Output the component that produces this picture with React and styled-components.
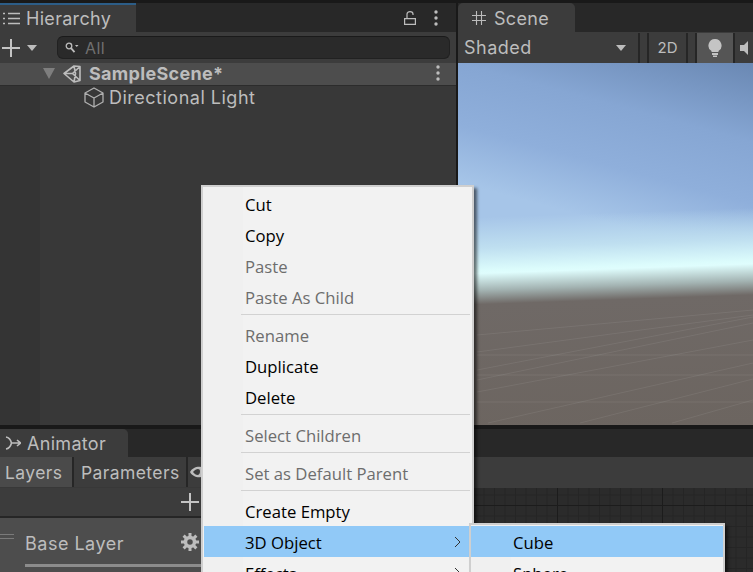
import React from 'react';
import styled, { createGlobalStyle } from 'styled-components';

const GlobalStyle = createGlobalStyle`
  html, body { margin: 0; padding: 0; background: #191919; }
  * { box-sizing: border-box; }
`

const Editor = styled.div`
  position: relative;
  width: 753px;
  height: 572px;
  overflow: hidden;
  background: #191919;
  padding-top: 3px;
  font-family: "Inter", "Liberation Sans", sans-serif;
  font-size: 18px;
  color: #bdbdbd;
`
const TopRow = styled.div`
  display: grid;
  grid-template-columns: 456px 295px;
  gap: 2px;
  height: 422px;
`
const Pane = styled.section`
  display: flex;
  flex-direction: column;
  min-width: 0;
  overflow: hidden;
`
const TabStrip = styled.div`
  display: flex;
  justify-content: space-between;
  flex: none;
  height: ${p => p.$height || 29}px;
  background: #282828;
`
const Tab = styled.div`
  display: flex;
  align-items: center;
  gap: ${p => p.$gap || 6}px;
  width: ${p => p.$width}px;
  padding-left: ${p => p.$pad || 2}px;
  padding-top: ${p => (p.$rounded ? 1 : 0)}px;
  background: #3c3c3c;
  border-top: ${p => (p.$active ? '2px solid #2c5d87' : 'none')};
  border-top-right-radius: ${p => (p.$active ? 0 : 5)}px;
  border-top-left-radius: ${p => (p.$rounded ? 5 : 0)}px;
  letter-spacing: 0.3px;
`
const TabTools = styled.div`
  display: flex;
  align-items: center;
  gap: 18px;
  padding-right: 18px;
  background: #282828;
`
const Toolbar = styled.div`
  display: flex;
  align-items: center;
  flex: none;
  height: 31px;
  background: #3c3c3c;
`
const PlusButton = styled.div`
  display: flex;
  align-items: center;
  gap: 7px;
  width: 57px;
  padding-left: 2px;
`
const SearchField = styled.div`
  display: flex;
  align-items: center;
  gap: 6px;
  width: 393px;
  height: 23px;
  padding-left: 7px;
  background: #2a2a2a;
  border: 1px solid #212121;
  border-top-color: #1a1a1a;
  border-radius: 6px;
  color: #707070;
  font-size: 16px;
  letter-spacing: 0.4px;
`
const SceneRow = styled.div`
  display: flex;
  align-items: center;
  flex: none;
  height: 23px;
  padding: 0 0 2px 43px;
  background: #4d4d4d;
  border-bottom: 1px solid #2c2c2c;
  font-weight: 700;
  letter-spacing: 0.3px;
`
const SceneName = styled.span`
  flex: 1;
  margin-left: 8px;
`
const FoldCaret = styled.svg`
  margin-right: 8px;
`
const RowMenu = styled.div`
  width: 37px;
  display: flex;
  padding-left: 17px;
`
const TreeBody = styled.div`
  flex: 1;
  padding-left: 40px;
  background: linear-gradient(to right, #343434 40px, #383838 40px);
`
const TreeRow = styled.div`
  display: flex;
  align-items: center;
  gap: 5px;
  height: 23px;
  padding-left: 44px;
  letter-spacing: 0.5px;
`
const SceneBar = styled(Toolbar)`
  gap: 0;
`
const ShadingLabel = styled.div`
  display: flex;
  align-items: center;
  justify-content: space-between;
  flex: none;
  width: 180px;
  padding: 0 12px 0 6px;
  letter-spacing: 0.5px;
`
const BarButton = styled.div`
  display: flex;
  align-items: center;
  justify-content: center;
  flex: none;
  width: ${p => p.$width}px;
  height: 30px;
  background: ${p => (p.$on ? '#555555' : '#3c3c3c')};
  border-left: ${p => (p.$sep ? '2px solid #262626' : 'none')};
  font-size: 15px;
`
const Viewport = styled.div`
  position: relative;
  flex: 1;
  background:
    linear-gradient(178deg,
      rgba(222, 253, 253, 0) 155px,
      #bfdff0 186px,
      #dcfcfc 208px,
      #dffdfd 211px,
      #a3b3b2 228px,
      #6f6966 242px,
      #6c6560 100%),
    linear-gradient(195deg, #6a88b3 0, #86a6d3 18%, #8fafdb 32%, #a6c5e8 45%);
`
const GridLines = styled.svg`
  position: absolute;
  inset: 0;
  display: block;
`
const BottomArea = styled.div`
  margin-top: 4px;
  height: 143px;
  display: flex;
  flex-direction: column;
  background: #282828;
`
const AnimatorBody = styled.div`
  flex: 1;
  display: flex;
  min-height: 0;
`
const LayerPanel = styled.div`
  width: 220px;
  flex: none;
  display: flex;
  flex-direction: column;
`
const PanelTabs = styled.div`
  display: flex;
  height: 31px;
  background: #3c3c3c;
  border-bottom: 1px solid #383838;
`
const PanelTab = styled.div`
  display: flex;
  align-items: center;
  width: ${p => p.$width}px;
  padding-left: ${p => p.$pad}px;
  background: ${p => (p.$on ? '#4a4a4a' : 'transparent')};
  border-right: 2px solid #262626;
  font-size: 17.5px;
  letter-spacing: 0.4px;
`
const AddRow = styled.div`
  display: flex;
  align-items: center;
  height: 30px;
  padding-left: 181px;
  background: #3c3c3c;
  border-bottom: 2px solid #262626;
`
const LayerCard = styled.div`
  position: relative;
  flex: 1;
  display: flex;
  align-items: flex-start;
  padding: 15px 0 0 25px;
  background: #4d4d4d;
  letter-spacing: 0.5px;
`
const LayerName = styled.span`
  flex: none;
  width: 156px;
`
const DragHandle = styled.div`
  position: absolute;
  left: 0;
  top: 16px;
  width: 14px;
  height: 5px;
  border-top: 1px solid #7a7a7a;
  border-bottom: 1px solid #7a7a7a;
`
const WeightBar = styled.div`
  position: absolute;
  left: 25px;
  right: 0;
  bottom: 5px;
  height: 3px;
  background: #8c8c8c;
`
const GraphHeader = styled.div`
  height: 31px;
  background: #3c3c3c;
`
const GraphPanel = styled.div`
  flex: 1;
  display: flex;
  flex-direction: column;
`
const Graph = styled.div`
  flex: 1;
  background-color: #2b2b2b;
  background-image:
    linear-gradient(#1c1c1c 1px, transparent 1px),
    linear-gradient(90deg, #1c1c1c 1px, transparent 1px),
    linear-gradient(#252525 1px, transparent 1px),
    linear-gradient(90deg, #252525 1px, transparent 1px);
  background-size: 105px 105px, 105px 105px, 10.5px 10.5px, 10.5px 10.5px;
  background-position: 0 17px, 22px 0, 0 6.5px, 1px 0;
`
const Menu = styled.div`
  position: absolute;
  left: ${p => p.$left}px;
  top: ${p => p.$top}px;
  width: ${p => p.$width}px;
  height: ${p => p.$height}px;
  padding: ${p => p.$padTop}px 0 0;
  background: linear-gradient(to right, #f0f0f0 40px, #f2f2f2 40px);
  border: 2px solid #cfcfcf;
  border-bottom: 0;
  box-shadow: 3px 3px 3px rgba(0, 0, 0, 0.55);
  font-family: "Open Sans", "Liberation Sans", sans-serif;
  font-size: 16.7px;
  color: #000;
  overflow: hidden;
`
const Item = styled.div`
  position: relative;
  display: flex;
  align-items: center;
  height: 31px;
  margin-left: ${p => (p.$flush ? 1 : 0)}px;
  padding: 1px 0 0 ${p => (p.$flush ? 41 : 42)}px;
  color: ${p => (p.$disabled ? '#6d6d6d' : '#000')};
  background: ${p => (p.$on ? '#91c9f7' : 'transparent')};
`
const Chevron = styled.svg`
  position: absolute;
  right: 11px;
  top: 10px;
`
const Separator = styled.div`
  height: 7px;
  margin: 0 2px 0 38px;
  padding-top: 2px;

  &::before {
    content: '';
    display: block;
    height: 1px;
    background: #d2d2d2;
  }
`

const ListIcon = () => (
  <svg width="18" height="16" viewBox="0 0 18 16" fill="none" stroke="#bdbdbd">
    <path d="M1 2.500h2M6 2.500h12M6 7.500h12M6 12.500h12M1 7.500h2M1 12.500h2" strokeWidth="1.300" />
  </svg>
)

const HashIcon = () => (
  <svg width="14" height="14" viewBox="0 0 14 14" fill="none" stroke="#bdbdbd" strokeWidth="1.100">
    <path d="M4.500 0v14M9.500 0v14M0 4.500h14M0 9.500h14" />
  </svg>
)

const AnimatorIcon = () => (
  <svg width="16" height="14" viewBox="0 0 16 14" fill="none" stroke="#bdbdbd" strokeWidth="1.600">
    <path d="M1 1c3 .5 4.500 2 5.500 6M1 13c3-.5 4.500-2 5.500-6H15M12 4l3.500 3-3.500 3" />
  </svg>
)

const Plus = () => (
  <svg width="18" height="18" viewBox="0 0 18 18" stroke="#c4c4c4" strokeWidth="2">
    <path d="M0 9h18M9 0v18" />
  </svg>
)

const Caret = () => (
  <svg width="10" height="6" viewBox="0 0 10 6">
    <path d="M0 0h10L5 6z" fill="#bdbdbd" />
  </svg>
)

const LockIcon = () => (
  <svg width="12" height="14" viewBox="0 0 12 14" fill="none" stroke="#bdbdbd" strokeWidth="1.200">
    <path d="M.600 7.600h10.800v5.800H.600zM3 7V3C3 1.200 4.500.600 6 .600S9 1.200 9 3v1" />
  </svg>
)

const Kebab = ({ color = '#bdbdbd' }) => (
  <svg width="4" height="16" viewBox="0 0 4 16" fill={color}>
    <circle cx="2" cy="2" r="1.700" />
    <circle cx="2" cy="8" r="1.700" />
    <circle cx="2" cy="14" r="1.700" />
  </svg>
)

const SearchIcon = () => (
  <svg width="14" height="12" viewBox="0 0 14 12" fill="none" stroke="#bdbdbd" strokeWidth="1.300">
    <circle cx="4" cy="4" r="2.800" />
    <path d="M6 6.200l3.500 4" strokeWidth="1.800" />
    <path d="M10 3h3.500l-1.750 2z" fill="#bdbdbd" stroke="none" />
  </svg>
)

const UnityIcon = () => (
  <svg width="18" height="19" viewBox="0 0 18 19" fill="none" stroke="#bdbdbd" strokeWidth="1.600" strokeLinejoin="round">
    <path d="M1 9.500L11 2l6 .5 0 14-6 1.500zM1 9.500h8.500M17 2.500L9.500 9.500l7.500 7M11 2l1.500 7.500L11 18" />
  </svg>
)

const CubeIcon = () => (
  <svg width="20" height="21" viewBox="0 0 20 21" fill="none" stroke="#b0b0b0" strokeWidth="1.300" strokeLinejoin="round">
    <path d="M10 1l9 5v9l-9 5-9-5V6zM1 6l9 5 9-5M10 11v9" />
  </svg>
)

const BulbIcon = () => (
  <svg width="14" height="18" viewBox="0 0 14 18" fill="#c4c4c4">
    <path d="M7 0a6.500 6.500 0 0 1 3.500 12v1h-7v-1A6.500 6.500 0 0 1 7 0z" />
    <rect x="4" y="14" width="6" height="2" />
    <rect x="5" y="16.500" width="4" height="1.500" />
  </svg>
)

const AudioIcon = () => (
  <svg width="8" height="14" viewBox="0 0 8 14" fill="#bdbdbd">
    <path d="M0 4h4l4-4v14l-4-4H0z" />
  </svg>
)

const EyeIcon = () => (
  <svg width="20" height="14" viewBox="0 0 20 14" fill="#bdbdbd">
    <path d="M0 7c3-6 13-8 20 0-7 8-17 6-20 0zM3 7c3 4 7 4 7-.5C10 3 6 3.500 3 7z" />
  </svg>
)

const GearIcon = () => (
  <svg width="18" height="18" viewBox="0 0 18 18" fill="none" stroke="#bdbdbd">
    <circle cx="9" cy="9" r="4.500" strokeWidth="3.500" />
    <path d="M9 0v4M9 14v4M0 9h4M14 9h4M2.600 2.600l2.800 2.800M12.600 12.600l2.800 2.800M2.600 15.400l2.800-2.800M12.600 5.400l2.800-2.800" strokeWidth="3" />
  </svg>
)

const ChevronIcon = () => (
  <Chevron width="7" height="12" viewBox="0 0 7 12" fill="none" stroke="#333" strokeWidth="1">
    <path d="M1 1l5 5-5 5" />
  </Chevron>
)

// lines of the scene floor grid, in page coordinates
const gridLines = [
  [477, 335, 753, 310],
  [477, 352, 753, 315],
  [477, 370, 753, 317],
  [477, 380, 753, 323],
  [477, 392, 753, 340],
  [488, 423, 753, 363],
  [580, 423, 753, 379],
  [672, 423, 753, 400],
  [477, 355, 753, 355],
  [477, 375, 753, 375],
  [477, 402, 753, 402],
];

const App = () => {
  return (
    <Editor>
      <GlobalStyle />
      <TopRow>
        <Pane>
          <TabStrip>
            <Tab $active $width={136}>
              <ListIcon />
              Hierarchy
            </Tab>
            <TabTools>
              <LockIcon />
              <Kebab />
            </TabTools>
          </TabStrip>
          <Toolbar>
            <PlusButton>
              <Plus />
              <Caret />
            </PlusButton>
            <SearchField>
              <SearchIcon />
              All
            </SearchField>
          </Toolbar>
          <SceneRow>
            <FoldCaret width="12" height="11" viewBox="0 0 12 11">
              <path d="M0 0h12L6 11z" fill="#7e7e7e" />
            </FoldCaret>
            <UnityIcon />
            <SceneName>SampleScene*</SceneName>
            <RowMenu><Kebab /></RowMenu>
          </SceneRow>
          <TreeBody>
            <TreeRow>
              <CubeIcon />
              Directional Light
            </TreeRow>
          </TreeBody>
        </Pane>
        <Pane>
          <TabStrip>
            <Tab $rounded $width={117} $pad={14} $gap={8}>
              <HashIcon />
              Scene
            </Tab>
          </TabStrip>
          <SceneBar>
            <ShadingLabel>
              Shaded
              <Caret />
            </ShadingLabel>
            <BarButton $width={9} $sep />
            <BarButton $width={39} $sep>2D</BarButton>
            <BarButton $width={9} $sep />
            <BarButton $width={38} $sep $on><BulbIcon /></BarButton>
            <BarButton $width={20} $sep><AudioIcon /></BarButton>
          </SceneBar>
          <Viewport>
            <GridLines width="295" height="362" viewBox="458 63 295 362" stroke="rgba(255,255,255,0.07)">
              {gridLines.map((l, i) => (
                <line key={i} x1={l[0]} y1={l[1]} x2={l[2]} y2={l[3]} />
              ))}
            </GridLines>
          </Viewport>
        </Pane>
      </TopRow>
      <BottomArea>
        <TabStrip $height={28}>
          <Tab $width={128} $pad={5}>
            <AnimatorIcon />
            Animator
          </Tab>
        </TabStrip>
        <AnimatorBody>
          <LayerPanel>
            <PanelTabs>
              <PanelTab $on $width={74} $pad={5}>Layers</PanelTab>
              <PanelTab $width={114} $pad={7}>Parameters</PanelTab>
              <PanelTab $width={30} $pad={2}><EyeIcon /></PanelTab>
            </PanelTabs>
            <AddRow><Plus /></AddRow>
            <LayerCard>
              <DragHandle />
              <LayerName>Base Layer</LayerName>
              <GearIcon />
              <WeightBar />
            </LayerCard>
          </LayerPanel>
          <GraphPanel>
            <GraphHeader />
            <Graph />
          </GraphPanel>
        </AnimatorBody>
      </BottomArea>

      <Menu $left={201} $top={185} $width={273} $height={387} $padTop={1}>
        <Item>Cut</Item>
        <Item>Copy</Item>
        <Item $disabled>Paste</Item>
        <Item $disabled>Paste As Child</Item>
        <Separator />
        <Item $disabled>Rename</Item>
        <Item>Duplicate</Item>
        <Item>Delete</Item>
        <Separator />
        <Item $disabled>Select Children</Item>
        <Separator />
        <Item $disabled>Set as Default Parent</Item>
        <Separator />
        <Item>Create Empty</Item>
        <Item $on $flush>3D Object<ChevronIcon /></Item>
        <Item>Effects<ChevronIcon /></Item>
      </Menu>
      <Menu $left={469} $top={523} $width={256} $height={49} $padTop={1}>
        <Item $on>Cube</Item>
        <Item>Sphere</Item>
      </Menu>
    </Editor>
  );
};

export default App;
